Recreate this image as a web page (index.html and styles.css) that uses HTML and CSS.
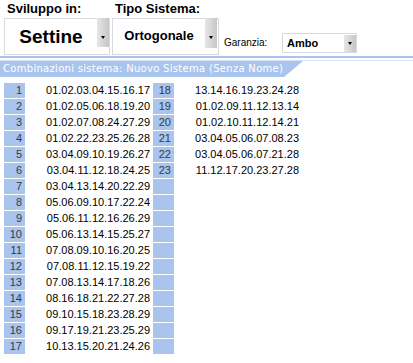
FILE: index.html
```html
<!DOCTYPE html>
<html>
<head>
<meta charset="utf-8">
<link rel="stylesheet" href="styles.css">
</head>
<body>
<div class="top">
  <div class="field f1">
    <div class="label">Sviluppo in:</div>
    <div class="select big"><span class="val">Settine</span><span class="btn"><i class="arrow"></i></span></div>
  </div>
  <div class="field f2">
    <div class="label">Tipo Sistema:</div>
    <div class="select mid"><span class="val">Ortogonale</span><span class="btn"><i class="arrow"></i></span></div>
  </div>
  <div class="field f3">
    <span class="small-label">Garanzia:</span>
    <div class="select sm"><span class="val">Ambo</span><span class="btn"><i class="arrow"></i></span></div>
  </div>
</div>
<div class="rule"></div>
<div class="rule2"></div>
<div class="tab">Combinazioni sistema: Nuovo Sistema (Senza Nome)</div>
<div class="grid">
  <div class="n">1</div><div class="c">01.02.03.04.15.16.17</div><div class="n">18</div><div class="c">13.14.16.19.23.24.28</div>
  <div class="n">2</div><div class="c">01.02.05.06.18.19.20</div><div class="n">19</div><div class="c">01.02.09.11.12.13.14</div>
  <div class="n">3</div><div class="c">01.02.07.08.24.27.29</div><div class="n">20</div><div class="c">01.02.10.11.12.14.21</div>
  <div class="n">4</div><div class="c">01.02.22.23.25.26.28</div><div class="n">21</div><div class="c">03.04.05.06.07.08.23</div>
  <div class="n">5</div><div class="c">03.04.09.10.19.26.27</div><div class="n">22</div><div class="c">03.04.05.06.07.21.28</div>
  <div class="n">6</div><div class="c">03.04.11.12.18.24.25</div><div class="n">23</div><div class="c">11.12.17.20.23.27.28</div>
  <div class="n">7</div><div class="c">03.04.13.14.20.22.29</div><div class="n"></div><div class="c"></div>
  <div class="n">8</div><div class="c">05.06.09.10.17.22.24</div><div class="n"></div><div class="c"></div>
  <div class="n">9</div><div class="c">05.06.11.12.16.26.29</div><div class="n"></div><div class="c"></div>
  <div class="n">10</div><div class="c">05.06.13.14.15.25.27</div><div class="n"></div><div class="c"></div>
  <div class="n">11</div><div class="c">07.08.09.10.16.20.25</div><div class="n"></div><div class="c"></div>
  <div class="n">12</div><div class="c">07.08.11.12.15.19.22</div><div class="n"></div><div class="c"></div>
  <div class="n">13</div><div class="c">07.08.13.14.17.18.26</div><div class="n"></div><div class="c"></div>
  <div class="n">14</div><div class="c">08.16.18.21.22.27.28</div><div class="n"></div><div class="c"></div>
  <div class="n">15</div><div class="c">09.10.15.18.23.28.29</div><div class="n"></div><div class="c"></div>
  <div class="n">16</div><div class="c">09.17.19.21.23.25.29</div><div class="n"></div><div class="c"></div>
  <div class="n">17</div><div class="c">10.13.15.20.21.24.26</div><div class="n"></div><div class="c"></div>
</div>
</body>
</html>
```
FILE: styles.css
```css
html, body {
  margin: 0;
  padding: 0;
  background: #ffffff;
  font-family: "Liberation Sans", Arial, sans-serif;
  color: #000;
}
.top {
  display: flex;
  align-items: flex-start;
  height: 55px;
  padding-left: 4px;
}
.field { display: flex; flex-direction: column; }
.f1 { width: 108px; }
.f2 { width: 107px; }
.f3 {
  flex-direction: row;
  align-items: center;
  margin-top: 33px;
  margin-left: 5px;
}
.label {
  font-weight: bold;
  font-size: 13px;
  line-height: 16px;
  padding-top: 1px;
  padding-left: 3px;
  margin-bottom: 1px;
  white-space: nowrap;
}
.select {
  display: flex;
  box-sizing: border-box;
  border: 1px solid #d6dbe2;
  background: #fff;
  font-weight: bold;
}
.select .val {
  flex: 1;
  text-align: center;
  white-space: nowrap;
}
.btn {
  width: 12px;
  background: linear-gradient(to right, #e6e6e6, #c6c6c6);
  display: flex;
  align-items: flex-end;
  justify-content: center;
}
.arrow {
  width: 0;
  height: 0;
  border-left: 2.5px solid transparent;
  border-right: 2.5px solid transparent;
  border-top: 3px solid #000;
}
.big { width: 106px; height: 37px; }
.big .val { font-size: 19px; line-height: 35px; }
.big .btn { height: 29px; margin-top: -1px; }
.big .arrow { margin-bottom: 8px; }
.mid { width: 107px; height: 37px; margin-left: 0; }
.mid .val { font-size: 13px; line-height: 33px; }
.mid .btn { height: 30px; margin-top: -1px; margin-right: 1px; }
.mid .arrow { margin-bottom: 9px; }
.small-label {
  font-size: 10px;
  line-height: 20px;
  width: 58px;
}
.sm { width: 75px; height: 20px; }
.sm .val { font-size: 11px; line-height: 18px; text-align: left; padding-left: 4px; }
.sm .btn { height: 17px; margin-top: 1px; }
.sm .arrow { margin-bottom: 7px; }
.rule {
  height: 2px;
  background: #a9c5ee;
  margin-top: 1px;
}
.rule2 {
  height: 1px;
  background: #d7e3f4;
  margin-top: 2px;
}
.tab {
  width: 303px;
  height: 16px;
  box-sizing: border-box;
  background: #a9c5ee;
  color: #fff;
  font-family: "DejaVu Sans", Verdana, sans-serif;
  font-size: 10px;
  letter-spacing: 0.3px;
  line-height: 16px;
  padding-left: 3px;
  white-space: nowrap;
  clip-path: polygon(0 0, 100% 0, 284px 100%, 0 100%);
}
.grid {
  display: grid;
  grid-template-columns: 21px 128px 21px 128px;
  grid-auto-rows: 15px;
  row-gap: 1px;
  margin-top: 6px;
  margin-left: 4px;
  font-size: 11px;
  line-height: 15px;
}
.n {
  background: #a9c5ee;
  color: #333a44;
  text-align: right;
  padding-right: 3px;
}
.c {
  text-align: right;
  padding-right: 3px;
}
```
